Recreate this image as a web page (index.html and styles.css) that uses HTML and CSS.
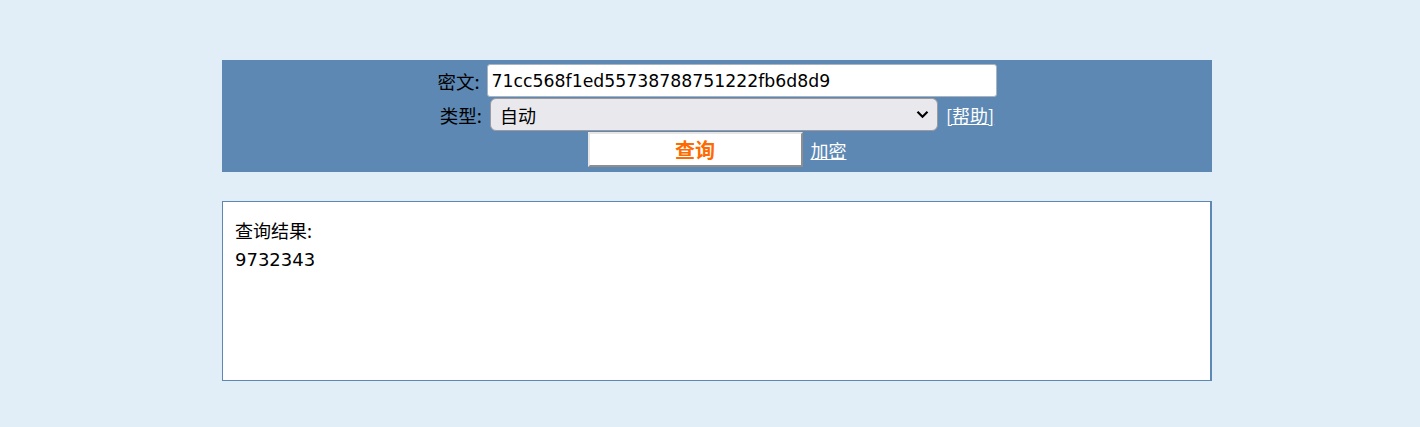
FILE: index.html
```html
<!DOCTYPE html>
<html lang="zh-CN">
<head>
<meta charset="utf-8">
<title>查询</title>
<link rel="stylesheet" href="styles.css">
</head>
<body>
<div class="wrap">
  <form class="panel">
    <div class="row">
      <label class="lbl" for="c">密文:</label>
      <input id="c" class="txt" type="text" value="71cc568f1ed55738788751222fb6d8d9">
    </div>
    <div class="row">
      <label class="lbl" for="t">类型:</label>
      <div class="sel">
        <span class="sel-text">自动</span>
        <svg class="chev" width="13" height="9" viewBox="0 0 13 9"><path d="M1.5 1.8 L6.5 6.8 L11.5 1.8" fill="none" stroke="#000" stroke-width="2.2"/></svg>
      </div>
      <a class="lnk" href="#">[帮助]</a>
    </div>
    <div class="row">
      <button class="btn" type="button">查询</button>
      <a class="lnk" href="#">加密</a>
    </div>
  </form>
  <div class="result">
    <div class="res-title">查询结果:</div>
    <div class="res-val">9732343</div>
  </div>
</div>
</body>
</html>
```
FILE: styles.css
```css
html, body {
  margin: 0;
  padding: 0;
  background: #e1eef7;
}
body {
  font-family: "DejaVu Sans", "Noto Sans CJK SC", sans-serif;
  font-size: 18px;
  color: #000;
}
.wrap {
  width: 990px;
  margin-left: 222px;
  padding-top: 60px;
}
.panel {
  background: #5c88b3;
  padding: 4px 0 5px;
  display: flex;
  flex-direction: column;
  align-items: center;
  gap: 1px;
  margin: 0;
}
.row {
  display: flex;
  align-items: center;
  justify-content: center;
}
.lbl {
  font-family: "Noto Sans CJK SC", sans-serif;
  font-size: 18.5px;
  margin-right: 7px;
  color: #000;
}
.txt {
  width: 510px;
  height: 33px;
  box-sizing: border-box;
  border: 1px solid #a8b4c0;
  border-radius: 3px;
  background: #fff;
  font-family: "DejaVu Sans", sans-serif;
  font-size: 17.3px;
  padding: 0 4px;
  margin: 0;
  color: #000;
}
.sel {
  width: 448px;
  height: 33px;
  box-sizing: border-box;
  border: 1px solid #9a9aa0;
  border-radius: 6px;
  background: #e9e8ed;
  display: flex;
  align-items: center;
  justify-content: space-between;
  padding: 0 8px 0 9px;
  margin-left: 1px;
}
.sel-text {
  font-family: "Noto Sans CJK SC", sans-serif;
  font-size: 18px;
}
.lnk {
  color: #fff;
  text-decoration: underline;
  font-family: "Noto Sans CJK SC", sans-serif;
  font-size: 18px;
  margin-left: 8px;
}
.btn {
  width: 215px;
  height: 35px;
  box-sizing: border-box;
  background: #fff;
  border: 2px solid;
  border-color: #e6e6e6 #8e8e8e #8e8e8e #e6e6e6;
  color: #ff6a00;
  font-family: "Noto Sans CJK SC", sans-serif;
  font-weight: bold;
  font-size: 20px;
  padding: 0;
  margin: 0;
  line-height: 1;
}
.result {
  margin-top: 29px;
  height: 180px;
  box-sizing: border-box;
  background: #fff;
  border: 1px solid #5c88b3;
  border-right-width: 2px;
  padding: 14px 12px;
}
.res-title {
  font-family: "Noto Sans CJK SC", sans-serif;
  font-size: 18px;
  line-height: 29px;
}
.res-val {
  font-family: "DejaVu Sans", sans-serif;
  font-size: 18px;
  line-height: 29px;
}
```
